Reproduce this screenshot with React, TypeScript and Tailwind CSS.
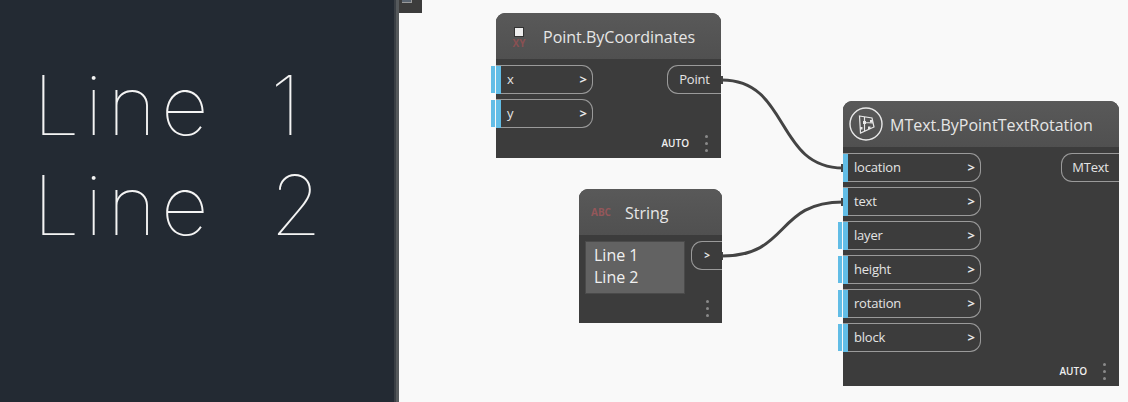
import React from 'react';

type PortProps = { label: string; extra?: boolean };

const InPort = ({ label, extra }: PortProps) => (
  <div className="relative h-[29px] w-full">
    {extra && <div className="absolute left-[-5px] top-[1px] h-[27px] w-[4px] bg-[#62bde6]" />}
    <div className="flex h-full w-full items-center justify-between rounded-r-[11px] border border-l-0 border-[#9a9a9a] pl-[11px] pr-[5px]">
      <span className="text-[13px] font-medium tracking-[-0.2px] text-[#e4e4e4]">{label}</span>
      <span className="text-[13px] font-bold text-[#e8e8e8]">&gt;</span>
    </div>
    <div className="absolute left-0 top-[0.5px] h-[28px] w-[5px] bg-[#62bde6]" />
  </div>
);

const OutPort = ({ label, className }: { label: string; className: string }) => (
  <div className={`flex h-[29px] items-center justify-center rounded-l-[11px] border border-r-0 border-[#9a9a9a] ${className}`}>
    {label}
  </div>
);

const Dots = () => (
  <div className="flex flex-col gap-[4px]">
    <div className="size-[3px] rounded-full bg-[#8a8a8a]" />
    <div className="size-[3px] rounded-full bg-[#8a8a8a]" />
    <div className="size-[3px] rounded-full bg-[#8a8a8a]" />
  </div>
);

const Header = ({ title, icon, gap }: { title: string; icon: React.ReactNode; gap: string }) => (
  <div className="flex h-[46px] items-center rounded-t-[9px] bg-gradient-to-b from-[#595959] to-[#505050]">
    {icon}
    <span className={`mt-[2px] text-[16px] text-[#e6e6e6] ${gap}`}>{title}</span>
  </div>
);

const MTextIcon = () => (
  <svg width="34" height="34" viewBox="0 0 34 34" fill="none" className="ml-[6px] shrink-0">
    <circle cx="17" cy="17" r="16" stroke="#e8e8e8" strokeWidth="1.4" />
    <path d="M10.5 9 L23 11 L25 20 L11.5 26 Z M15.5 10 V24 M15.5 15.5 L24 16" stroke="#e8e8e8" strokeWidth="1.2" />
    <rect x="14" y="14" width="3" height="3" fill="#e8e8e8" />
    <rect x="21" y="13" width="2.5" height="2.5" fill="#e8e8e8" />
    <rect x="11" y="20" width="2.5" height="2.5" fill="#e8e8e8" />
    <rect x="19" y="19.5" width="2.5" height="2.5" fill="#e8e8e8" />
  </svg>
);

const PointIcon = () => (
  <div className="ml-[16px] mt-[3px] flex w-[14px] shrink-0 flex-col items-center">
    <div className="size-[10px] border border-[#333333] bg-[#eeeeee]" />
    <span className="mt-[2px] text-[10px] font-bold leading-[9px] text-[#8a5052]">XY</span>
  </div>
);

export default function App() {
  return (
    <div className="flex h-[402px] w-[1128px] overflow-hidden bg-[#f9f9f9] font-['Open_Sans',sans-serif]">
      <div className="w-[394px] shrink-0 bg-[#232a33] pl-[33px] pt-[55px] font-['Inter',sans-serif] text-[83px] font-thin leading-[100px] text-[#f4f4f4]">
        <div className="whitespace-pre tracking-[5px]">Line  1</div>
        <div className="whitespace-pre tracking-[5px]">Line  2</div>
      </div>
      <div className="w-[2px] shrink-0 bg-[#3a3f45]" />
      <div className="w-[3px] shrink-0 bg-[#55595c]" />

      <div className="relative flex-1">
        <div className="h-[13px] w-[23px] bg-[#3c3c3c] pl-[3px]">
          <div className="h-[3px] w-[10px] border-b border-r border-[#9a9a9a] bg-[#5a6470]" />
        </div>

        {/* wires */}
        <svg width="729" height="402" className="absolute left-0 top-0" fill="none">
          <path d="M323 80 C 391 80, 376 168, 444 168" stroke="#444444" strokeWidth="3" />
          <path d="M323 256 C 391 256, 376 202, 444 202" stroke="#444444" strokeWidth="3" />
          <path d="M323 76 V84 M323 252 V260 M443 164 V172 M443 198 V206" stroke="#444444" strokeWidth="2" />
        </svg>

        {/* Point.ByCoordinates */}
        <div className="absolute left-[97px] top-[13px] flex h-[145px] w-[225px] flex-col rounded-t-[9px] bg-[#3c3c3c]">
          <Header title="Point.ByCoordinates" icon={<PointIcon />} gap="ml-[17px]" />
          <div className="flex justify-between pt-[6px]">
            <div className="flex w-[97px] flex-col gap-[5px]">
              <InPort label="x" extra />
              <InPort label="y" extra />
            </div>
            <OutPort label="Point" className="w-[54px] text-[13px] font-medium tracking-[-0.2px] text-[#e4e4e4]" />
          </div>
          <div className="mt-auto flex items-center justify-end pb-[6px] pr-[13px]">
            <span className="mr-[16px] text-[10px] font-semibold text-[#f0f0f0]">AUTO</span>
            <Dots />
          </div>
        </div>

        {/* String */}
        <div className="absolute left-[180px] top-[189px] flex h-[134px] w-[143px] flex-col rounded-t-[9px] bg-[#3c3c3c]">
          <Header
            title="String"
            icon={<span className="ml-[12px] text-[10px] font-bold text-[#94575a]">ABC</span>}
            gap="ml-[14px]"
          />
          <div className="flex justify-between pl-[6px] pt-[6px]">
            <div className="h-[53px] w-[100px] border border-[#4a4a4a] bg-[#626262] px-[8px] py-[2px] text-[16px] leading-[22px] text-[#f0f0f0]">
              Line 1
              <br />
              Line 2
            </div>
            <OutPort label=">" className="w-[31px] text-[10px] font-bold text-[#e8e8e8]" />
          </div>
          <div className="mt-auto flex justify-end pb-[6px] pr-[13px]">
            <Dots />
          </div>
        </div>

        {/* MText.ByPointTextRotation */}
        <div className="absolute left-[444px] top-[101px] flex h-[285px] w-[276px] flex-col rounded-t-[9px] bg-[#3c3c3c]">
          <Header title="MText.ByPointTextRotation" icon={<MTextIcon />} gap="ml-[7px]" />
          <div className="flex justify-between pt-[6px]">
            <div className="flex w-[138px] flex-col gap-[5px]">
              <InPort label="location" />
              <InPort label="text" />
              <InPort label="layer" extra />
              <InPort label="height" extra />
              <InPort label="rotation" extra />
              <InPort label="block" extra />
            </div>
            <OutPort label="MText" className="w-[58px] text-[13px] font-medium tracking-[-0.2px] text-[#e4e4e4]" />
          </div>
          <div className="mt-auto flex items-center justify-end pb-[6px] pr-[13px]">
            <span className="mr-[16px] text-[10px] font-semibold text-[#f0f0f0]">AUTO</span>
            <Dots />
          </div>
        </div>
      </div>
    </div>
  );
}
